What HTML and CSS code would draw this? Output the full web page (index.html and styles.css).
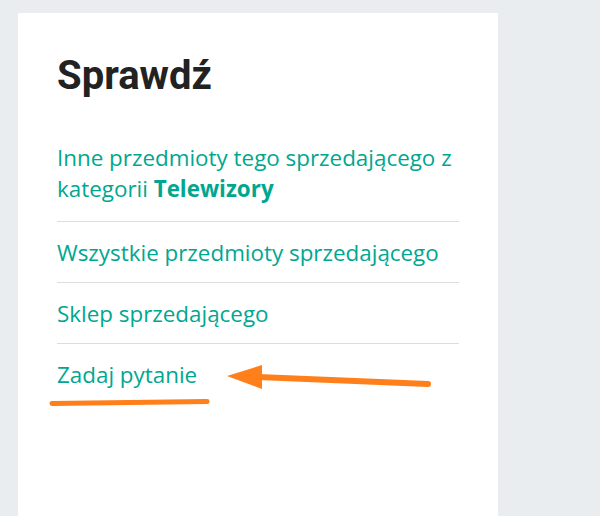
FILE: index.html
```html
<!DOCTYPE html>
<html lang="pl">
<head>
    <meta charset="UTF-8" />
    <meta name="viewport" content="width=device-width, initial-scale=1.0" />
    <title>Sprawdź</title>
    <link rel="stylesheet" href="styles.css">
</head>
<body>
    <div class="card">
        <h2 class="card-title">Sprawdź</h2>
        <ul class="links">
            <li><a href="#">Inne przedmioty tego sprzedającego z kategorii <b>Telewizory</b></a></li>
            <li><a href="#">Wszystkie przedmioty sprzedającego</a></li>
            <li><a href="#">Sklep sprzedającego</a></li>
            <li><a href="#">Zadaj pytanie</a></li>
        </ul>
    </div>

    <!-- adnotacja: strzałka i podkreślenie -->
    <svg class="note" width="600" height="516" viewBox="0 0 600 516">
        <path d="M428 384 L258 377" stroke="#ff7f1a" stroke-width="6" stroke-linecap="round" fill="none" />
        <polygon points="227,376 262,365 262,389" fill="#ff7f1a" />
        <path d="M52 403.5 L207 401.5" stroke="#ff7f1a" stroke-width="5" stroke-linecap="round" fill="none" />
    </svg>
</body>
</html>
```

FILE: styles.css
```css
body {
    margin: 0;
    padding: 13px 0 0 18px;
    background-color: #e9edf0;
    font-family: "Open Sans", sans-serif;
    height: 503px;
    overflow: hidden;
}
.card {
    width: 402px;
    height: 463px;
    background: white;
    padding: 40px 39px 0 39px;
}
.card-title {
    font-family: Roboto, sans-serif;
    font-weight: 700;
    font-size: 40px;
    line-height: 46px;
    color: #222;
    margin: 0 0 28px 0;
}
.links {
    list-style: none;
    margin: 0;
    padding: 0;
}
.links li {
    padding: 15px 0 14px 0;
    border-bottom: 1px solid #dddddd;
    font-size: 22.4px;
    line-height: 31px;
}
.links li:first-child {
    padding-bottom: 17px;
}
.links li:last-child {
    border-bottom: none;
}
.links a {
    color: #00a790;
    text-decoration: none;
}
.links b {
    font-weight: 700;
}
.note {
    position: absolute;
    left: 0;
    top: 0;
    pointer-events: none;
}
```
